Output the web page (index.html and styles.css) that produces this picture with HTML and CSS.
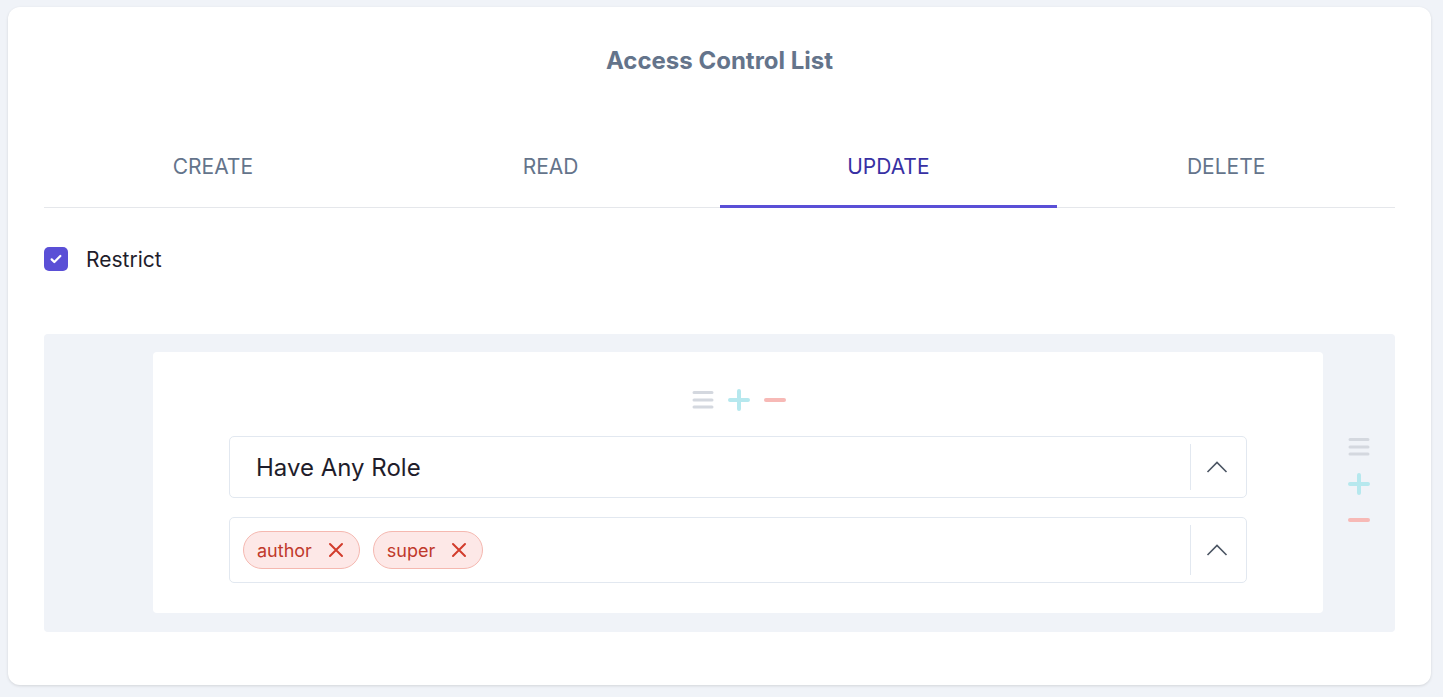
FILE: index.html
```html
<!DOCTYPE html>
<html>
<head>
<meta charset="utf-8">
<link rel="stylesheet" href="styles.css">
</head>
<body>
<div class="card">
  <h1 class="title">Access Control List</h1>
  <div class="tabs">
    <div class="tab">CREATE</div>
    <div class="tab">READ</div>
    <div class="tab active">UPDATE</div>
    <div class="tab">DELETE</div>
  </div>
  <label class="restrict">
    <span class="checkbox"><svg viewBox="0 0 24 24" width="16" height="16"><path d="M5.5 12.5l4 4L18.5 7.5" fill="none" stroke="#fff" stroke-width="3.4" stroke-linecap="round" stroke-linejoin="round"/></svg></span>
    <span class="restrict-label">Restrict</span>
  </label>
  <div class="panel">
    <div class="group">
      <div class="tools">
        <svg class="ic" width="22" height="22" viewBox="0 0 22 22"><g stroke="#d4d8df" stroke-width="3" stroke-linecap="round"><path d="M2 3.5h18M2 11h18M2 18h18"/></g></svg>
        <svg class="ic" width="22" height="22" viewBox="0 0 22 22"><g stroke="#b6e8ee" stroke-width="4" stroke-linecap="round"><path d="M11 2v18M2 11h18"/></g></svg>
        <svg class="ic" width="22" height="22" viewBox="0 0 22 22"><g stroke="#f7b9b6" stroke-width="4" stroke-linecap="round"><path d="M2 11h18"/></g></svg>
      </div>
      <div class="select sel1">
        <div class="value">Have Any Role</div>
        <div class="caret"><svg width="22" height="14" viewBox="0 0 22 14"><path d="M1.5 12L11 2.5 20.5 12" fill="none" stroke="#4b5563" stroke-width="1.6"/></svg></div>
      </div>
      <div class="select sel2">
        <div class="value tags">
          <span class="tag">author <svg width="16" height="16" viewBox="0 0 16 16"><path d="M2 2l12 12M14 2L2 14" stroke="#d23c2c" stroke-width="2" stroke-linecap="round"/></svg></span>
          <span class="tag">super <svg width="16" height="16" viewBox="0 0 16 16"><path d="M2 2l12 12M14 2L2 14" stroke="#d23c2c" stroke-width="2" stroke-linecap="round"/></svg></span>
        </div>
        <div class="caret"><svg width="22" height="14" viewBox="0 0 22 14"><path d="M1.5 12L11 2.5 20.5 12" fill="none" stroke="#4b5563" stroke-width="1.6"/></svg></div>
      </div>
    </div>
    <div class="side">
      <svg width="22" height="20" viewBox="0 0 22 20"><g stroke="#d4d8df" stroke-width="3" stroke-linecap="round"><path d="M2 2.5h18M2 10h18M2 17h18"/></g></svg>
      <svg class="side-plus" width="22" height="22" viewBox="0 0 22 22"><g stroke="#b6e8ee" stroke-width="4" stroke-linecap="round"><path d="M11 2v18M2 11h18"/></g></svg>
      <svg class="side-minus" width="22" height="6" viewBox="0 0 22 6"><g stroke="#f7b9b6" stroke-width="4" stroke-linecap="round"><path d="M2 3h18"/></g></svg>
    </div>
  </div>
</div>
</body>
</html>
```

FILE: styles.css
```css
* { box-sizing: border-box; }
html, body { margin: 0; background: #f0f3f8; }
body {
  padding: 7px 12px 12px 8px;
  font-family: Inter, "Noto Sans", sans-serif;
}
.card {
  background: #fff;
  border-radius: 12px;
  box-shadow: 0 1px 3px rgba(0,0,0,0.12);
  height: 678px;
  padding: 39px 36px 0 36px;
}
.title {
  margin: 0;
  text-align: center;
  font-size: 24px;
  line-height: 30px;
  font-weight: 700;
  color: #64748b;
}
.tabs {
  display: flex;
  margin-top: 49px;
  border-bottom: 1px solid #e5e7eb;
}
.tab {
  flex: 1;
  height: 83px;
  display: flex;
  align-items: center;
  justify-content: center;
  font-size: 21px;
  font-weight: 400;
  color: #64748b;
  border-bottom: 3px solid transparent;
  margin-bottom: -1px;
  padding-top: 3px;
}
.tab.active {
  color: #3730a3;
  border-bottom-color: #5a4fd6;
}
.restrict {
  display: flex;
  align-items: center;
  margin-top: 39px;
  height: 24px;
}
.checkbox {
  width: 24px;
  height: 24px;
  border-radius: 5px;
  background: #5a4fd6;
  display: flex;
  align-items: center;
  justify-content: center;
}
.restrict-label {
  margin-left: 18px;
  font-size: 21px;
  color: #1f1d2b;
}
.panel {
  margin-top: 63px;
  background: #f0f3f8;
  border-radius: 4px;
  display: flex;
  padding: 18px 0 19px 109px;
}
.group {
  flex: 1;
  background: #fff;
  border-radius: 4px;
  padding: 37px 76px 30px 76px;
}
.tools {
  display: flex;
  justify-content: center;
  gap: 14px;
  margin-bottom: 25px;
  padding-left: 2px;
}
.select {
  display: flex;
  border: 1px solid #e2e8f0;
  border-radius: 5px;
  background: #fff;
}
.sel1 { height: 62px; }
.sel2 { height: 66px; margin-top: 19px; }
.value {
  flex: 1;
  display: flex;
  align-items: center;
  padding-left: 26px;
  font-size: 24px;
  color: #1f1d2b;
}
.tags {
  padding-left: 13px;
  gap: 13px;
}
.tag {
  display: inline-flex;
  align-items: center;
  height: 38px;
  padding: 0 15px 0 13px;
  border: 1px solid #f5b8b0;
  background: #fde8e7;
  border-radius: 19px;
  color: #c0392b;
  font-size: 18px;
}
.tag svg { margin-left: 16px; }
.caret {
  width: 56px;
  display: flex;
  align-items: center;
  justify-content: center;
  border-left: 1px solid #e2e8f0;
  margin: 7px 0;
  padding-right: 4px;
}
.side {
  width: 72px;
  display: flex;
  flex-direction: column;
  align-items: center;
  padding-top: 85px;
}
.side-plus { margin-top: 16px; }
.side-minus { margin-top: 22px; }
```
